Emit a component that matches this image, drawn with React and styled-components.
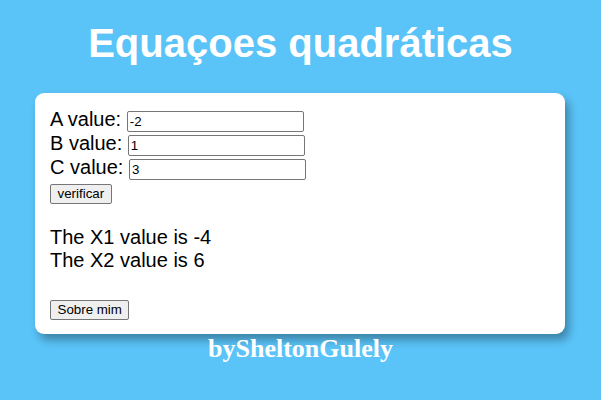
import React from "react";
import styled, { createGlobalStyle } from "styled-components";

const GlobalStyle = createGlobalStyle`
  html, body {
    margin: 0;
    padding: 0;
    background: #5ac3f7;
  }
  body {
    font-family: "Liberation Sans", Arial, sans-serif;
  }
`;

const Page = styled.main`
  min-height: 400px;
  background: #5ac3f7;
  padding-top: 20px;
  box-sizing: border-box;
`;

const Title = styled.h1`
  margin: 0;
  font-family: "Liberation Sans", Arial, sans-serif;
  font-size: 40px;
  line-height: 46px;
  font-weight: bold;
  color: #ffffff;
  text-align: center;
`;

const Card = styled.section`
  margin: 27px 0 0 35px;
  width: 530px;
  box-sizing: border-box;
  padding: 15px 15px 14px;
  background: #ffffff;
  border-radius: 9px;
  box-shadow: 4px 6px 9px rgba(0, 0, 0, 0.32);
  font-family: "Liberation Sans", Arial, sans-serif;
  font-size: 20px;
  color: #000;
`;

const FieldRow = styled.div`
  font-size: 20px;
`;

const TextInput = styled.input`
  box-sizing: border-box;
  width: 177px;
  height: 21px;
  padding: 2px 2px;
  border: 1px solid #767676;
  border-radius: 2px;
  font-family: "Liberation Sans", Arial, sans-serif;
  font-size: 13.33px;
  line-height: 15px;
  color: #000;
  background: #fff;
  margin: 0;
`;

const ButtonLine = styled.div`
  font-size: 20px;
  margin-top: ${(p) => p.$gap || 0}px;
`;

const Button = styled.button`
  box-sizing: border-box;
  height: 20px;
  padding: 1px 6.5px;
  border: 1px solid #767676;
  border-radius: 2px;
  background: #efefef;
  font-family: "Liberation Sans", Arial, sans-serif;
  font-size: 13.33px;
  line-height: 16px;
  color: #000;
  margin: 0;
`;

const Results = styled.div`
  margin-top: 22px;
  font-size: 20px;
  line-height: 23px;
`;

const ResultLine = styled.div``;

const Footer = styled.h2`
  margin: 0;
  font-family: "Liberation Serif", "Times New Roman", serif;
  font-size: 26px;
  line-height: 30px;
  font-weight: bold;
  color: #ffffff;
  text-align: center;
`;

const fields = [
  { label: "A", value: "-2" },
  { label: "B", value: "1" },
  { label: "C", value: "3" },
];

export default function App() {
  return (
    <>
      <GlobalStyle />
      <Page>
        <Title>Equaçoes quadráticas</Title>
        <Card>
          {fields.map((f) => (
            <FieldRow key={f.label}>
              {f.label} value: <TextInput type="text" defaultValue={f.value} />
            </FieldRow>
          ))}
          <ButtonLine>
            <Button type="button">verificar</Button>
          </ButtonLine>
          <Results>
            <ResultLine>The X1 value is -4</ResultLine>
            <ResultLine>The X2 value is 6</ResultLine>
          </Results>
          <ButtonLine $gap={24}>
            <Button type="button">Sobre mim</Button>
          </ButtonLine>
        </Card>
        <Footer>bySheltonGulely</Footer>
      </Page>
    </>
  );
}
